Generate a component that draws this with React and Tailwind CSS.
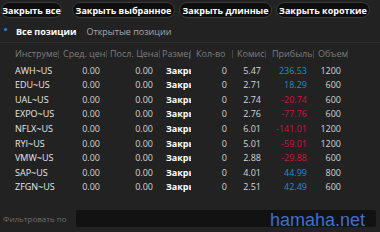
import React from "react";

const rows = [
  ["AWH~US", "5.47", "236.53", "1200"],
  ["EDU~US", "2.71", "18.29", "600"],
  ["UAL~US", "2.74", "-20.74", "600"],
  ["EXPO~US", "2.76", "-77.76", "600"],
  ["NFLX~US", "6.01", "-141.01", "1200"],
  ["RYI~US", "5.01", "-59.01", "1200"],
  ["VMW~US", "2.88", "-29.88", "600"],
  ["SAP~US", "4.01", "44.99", "800"],
  ["ZFGN~US", "2.51", "42.49", "600"],
];

const headers = [
  ["Инструмент", "w-[46px] pl-[2px]"],
  ["Сред. цена", "w-[48px] pl-[4px]"],
  ["Посл. Цена", "w-[53px] pl-[3px]"],
  ["Размер", "w-[31px] pl-[2px]"],
  ["Кол-во", "w-[42px] pl-[5px]"],
  ["Комиссия", "w-[33px] pl-[4px]"],
  ["Прибыль", "w-[48px] pl-[6px]"],
  ["Объем", "w-[34px] pl-[4px]"],
];

function Btn({ children, w }) {
  return (
    <div
      className={`${w} h-[16px] rounded-full bg-[#0e0e0e] border border-[#3a3a3a] flex items-center justify-center text-white font-bold text-[9px] leading-none whitespace-nowrap`}
    >
      {children}
    </div>
  );
}

export default function App() {
  return (
    <div className="w-[380px] h-[232px] bg-[#222222] overflow-hidden relative font-['Open_Sans',sans-serif] flex flex-col">
      <div className="flex items-center pt-[2px] pl-[1px]">
        <Btn w="w-[61px]">Закрыть все</Btn>
        <div className="w-[10px]" />
        <Btn w="w-[103px]">Закрыть выбранное</Btn>
        <div className="w-[4px]" />
        <Btn w="w-[93px]">Закрыть длинные</Btn>
        <div className="w-[4px]" />
        <Btn w="w-[94px]">Закрыть короткие</Btn>
      </div>

      <div className="flex items-center h-[22px] mt-[3px] border-b border-[#2e2e2e]">
        <div className="w-[3px] h-[3px] rounded-full bg-[#1e88d8] ml-[4px] mb-[5px]" />
        <div className="ml-[9px] text-white font-bold text-[9px] whitespace-nowrap">Все позиции</div>
        <div className="ml-[10px] text-[#a8a8a8] text-[9px] whitespace-nowrap">Открытые позиции</div>
      </div>

      <div className="pl-[13px] mt-[4px]">
        <div className="flex h-[13px] items-center text-[#7d7d7d] text-[9px]">
          {headers.map(([t, c], i) => (
            <div key={i} className={`${c} flex items-center whitespace-nowrap`}>
              <span className="flex-1 min-w-0 overflow-hidden">{t}</span>
              <span className="w-px h-[8px] bg-[#444] shrink-0" />
            </div>
          ))}
        </div>
        <div className="mt-[3px]">
          {rows.map(([name, fee, profit, vol], i) => {
            const neg = profit.startsWith("-");
            return (
              <div key={i} className="flex h-[14.6px] items-center text-[9px] text-[#d4d4d4] whitespace-nowrap">
                <div className="w-[46px] pl-[2px] text-[#e6e6e6] overflow-hidden">{name}</div>
                <div className="w-[48px] text-right pr-[7px]">0.00</div>
                <div className="w-[53px] text-right pr-[7px]">0.00</div>
                <div className="w-[31px] pl-[6px] overflow-hidden text-white font-bold">Закрыть</div>
                <div className="w-[42px] text-right pr-[6px]">0</div>
                <div className="w-[33px] text-right pr-[5px]">{fee}</div>
                <div className={`w-[48px] text-right pr-[7px] ${neg ? "text-[#c8183c]" : "text-[#1f8ad8]"}`}>{profit}</div>
                <div className="w-[34px] text-right pr-[7px]">{vol}</div>
              </div>
            );
          })}
        </div>
      </div>

      <div className="flex items-center mt-auto mb-[5px] h-[17px]">
        <div className="pl-[3px] w-[76px] text-[#6e6e6e] text-[8px] whitespace-nowrap">Фильтровать по</div>
        <div className="w-[300px] h-[17px] bg-[#121212] rounded-[2px]" />
      </div>

      <div className="absolute left-[270px] top-[211px] text-[18px] leading-none text-[#3f6fcf] font-['Liberation_Sans',sans-serif]">
        hamaha.net
      </div>
    </div>
  );
}
